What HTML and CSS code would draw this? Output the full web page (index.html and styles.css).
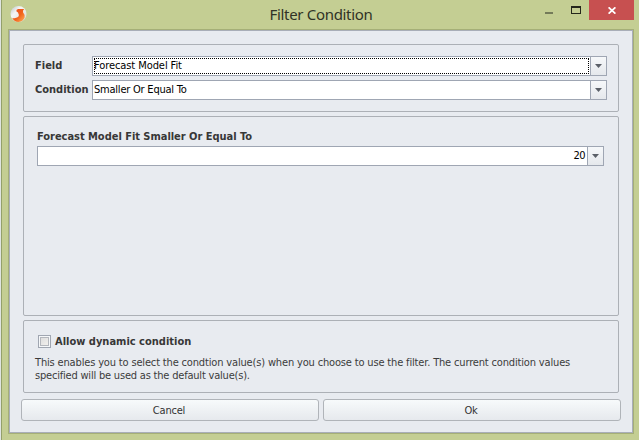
FILE: index.html
```html
<!DOCTYPE html>
<html lang="en">
<head>
<meta charset="utf-8">
<title>Filter Condition</title>
<link rel="stylesheet" href="styles.css">
</head>
<body>
<div class="window">
  <header class="titlebar">
    <svg class="logo" width="17" height="17" viewBox="0 0 17 17">
      <defs>
        <linearGradient id="ball" x1="0" y1="0" x2="1" y2="1"><stop offset="0" stop-color="#b9bfc0"/><stop offset=".35" stop-color="#f4f5f4"/><stop offset="1" stop-color="#d9d8d4"/></linearGradient>
        <linearGradient id="flame" x1="0" y1="0" x2="1" y2="1"><stop offset="0" stop-color="#e8481c"/><stop offset=".55" stop-color="#f2641c"/><stop offset="1" stop-color="#ffb45e"/></linearGradient>
      </defs>
      <circle cx="8.500" cy="8" r="8" fill="url(#ball)"/>
      <path d="M14.200 3H8.200Q6.200 3.200 6.300 5.300L8 6.500Q9.200 8.500 8.500 10.500Q7 12.300 2.200 12.300Q4.500 16 8.500 16Q13 15.600 14.600 11.500Q15 8.500 13 6.300Q12.600 4.300 14.200 3Z" fill="url(#flame)"/>
    </svg>
    <h1 class="title">Filter Condition</h1>
    <div class="controls">
      <span class="minimize"></span>
      <span class="maximize"></span>
      <span class="close"><svg width="8" height="7" viewBox="0 0 8 7"><path d="M.6.3 7.400 6.700M7.400.3.6 6.700" stroke="#fff" stroke-width="1.700"/></svg></span>
    </div>
  </header>
  <main class="client">
    <section class="panel fields">
      <label class="label">Field</label>
      <div class="combo"><span class="value focused">Forecast Model Fit</span><span class="drop"></span></div>
      <label class="label">Condition</label>
      <div class="combo"><span class="value">Smaller Or Equal To</span><span class="drop"></span></div>
    </section>
    <section class="panel criteria">
      <h2 class="heading">Forecast Model Fit Smaller Or Equal To</h2>
      <div class="combo"><span class="value number">20</span><span class="drop"></span></div>
    </section>
    <section class="panel dynamic">
      <label class="check"><span class="box"></span>Allow dynamic condition</label>
      <p class="note">This enables you to select the condtion value(s) when you choose to use the filter. The current condition values<br><span class="note-end">specified will be used as the default value(s).</span></p>
    </section>
    <footer class="actions"><button class="btn">Cancel</button><button class="btn">Ok</button></footer>
  </main>
</div>
</body>
</html>
```
FILE: styles.css
```css
* { box-sizing: border-box; }
body {
  margin: 0;
  width: 639px;
  height: 440px;
  overflow: hidden;
  background: #dfe4e2;
  font: 11px/13px "DejaVu Sans Condensed", "DejaVu Sans", sans-serif;
  font-stretch: condensed;
  color: #3b3b3b;
}
.window {
  height: 440px;
  margin-left: 1px;
  padding: 0 5px 0 7px;
  border-left: 1px solid #94a06b;
  background: #c4ce93;
}
.titlebar { position: relative; height: 29px; margin-left: -1px; }
.logo { position: absolute; left: 2px; top: 6px; }
.title {
  margin: 0;
  padding-top: 4px;
  text-align: center;
  font: normal 15px/20px "Noto Sans", "Open Sans", sans-serif;
  letter-spacing: -.32px;
  color: #303326;
}
.controls { position: absolute; right: 0; top: 0; display: flex; }
.minimize { width: 8px; height: 2px; margin: 12px 18px 0 0; background: #747b59; }
.maximize { width: 10px; height: 8px; margin: 6px 8px 0 0; border: 1px solid #25271c; border-top-width: 2px; }
.close { display: flex; width: 45px; height: 20px; padding: 7px 0 0 19px; background: #c75050; }
.client {
  width: 624px;
  height: 403px;
  margin-top: 1px;
  padding: 13px 12px 0 13px;
  border: 1px solid #a9aeb8;
  outline: 1px solid #a5af77;
  background: #e8ebf0;
}
.panel { width: 596px; border: 1px solid #acb0b6; border-radius: 2px; }
.fields {
  display: grid;
  grid-template-columns: 57px 515px;
  grid-auto-rows: 20px;
  row-gap: 4px;
  height: 68px;
  padding: 11px;
}
.label, .heading, .check { font-size: 11px; font-weight: bold; color: #373737; white-space: nowrap; }
.label { line-height: 20px; }
.heading { height: 16px; margin: 0; line-height: 13px; letter-spacing: -.03px; }
.combo { display: flex; height: 20px; border: 1px solid #9fa6b3; background: #fff; color: #000; }
.value { flex: 1; padding: 1px 1px 0; line-height: 16px; letter-spacing: -.22px; white-space: nowrap; }
.focused { margin: 1px; padding: 0; border: 1px dotted #000; line-height: 14px; letter-spacing: -.08px; text-indent: -1px; }
.number { padding-right: 2px; text-align: right; letter-spacing: -.5px; }
.drop {
  display: flex;
  justify-content: center;
  width: 16px;
  padding-top: 7px;
  border-left: 1px solid #9fa6b3;
  background: linear-gradient(#f6f8fa, #e5e8ec);
}
.drop::before { content: ""; width: 7px; height: 4px; background: #5b6068; clip-path: polygon(0 0, 100% 0, 50% 100%); }
.criteria { height: 200px; margin-top: 4px; padding: 13px; }
.criteria .combo { width: 567px; }
.dynamic { height: 73px; margin-top: 4px; padding: 14px 11px 0; }
.check { display: flex; align-items: center; height: 13px; padding-left: 3px; }
.box {
  width: 13px;
  height: 13px;
  margin-right: 4px;
  border: 1px solid #a0a6b1;
  background: linear-gradient(135deg, #dedede, #f2f0ed) 2px 2px / 7px 7px no-repeat;
  box-shadow: inset 0 0 0 1px #f5f7f9, inset 0 0 0 2px #b4b7bd;
}
.note { margin: 8px 0 0; letter-spacing: -.16px; white-space: nowrap; }
.note-end { letter-spacing: -.2px; }
.actions { display: flex; gap: 4px; margin: 6px 0 0 -2px; width: 600px; }
.btn {
  flex: 1;
  height: 22px;
  padding: 0 2px 0 0;
  border: 1px solid #b0b4b9;
  border-radius: 3px;
  background: linear-gradient(#f7fafb, #e6e9ed);
  font: inherit;
  letter-spacing: -.2px;
  color: #333;
}
```
